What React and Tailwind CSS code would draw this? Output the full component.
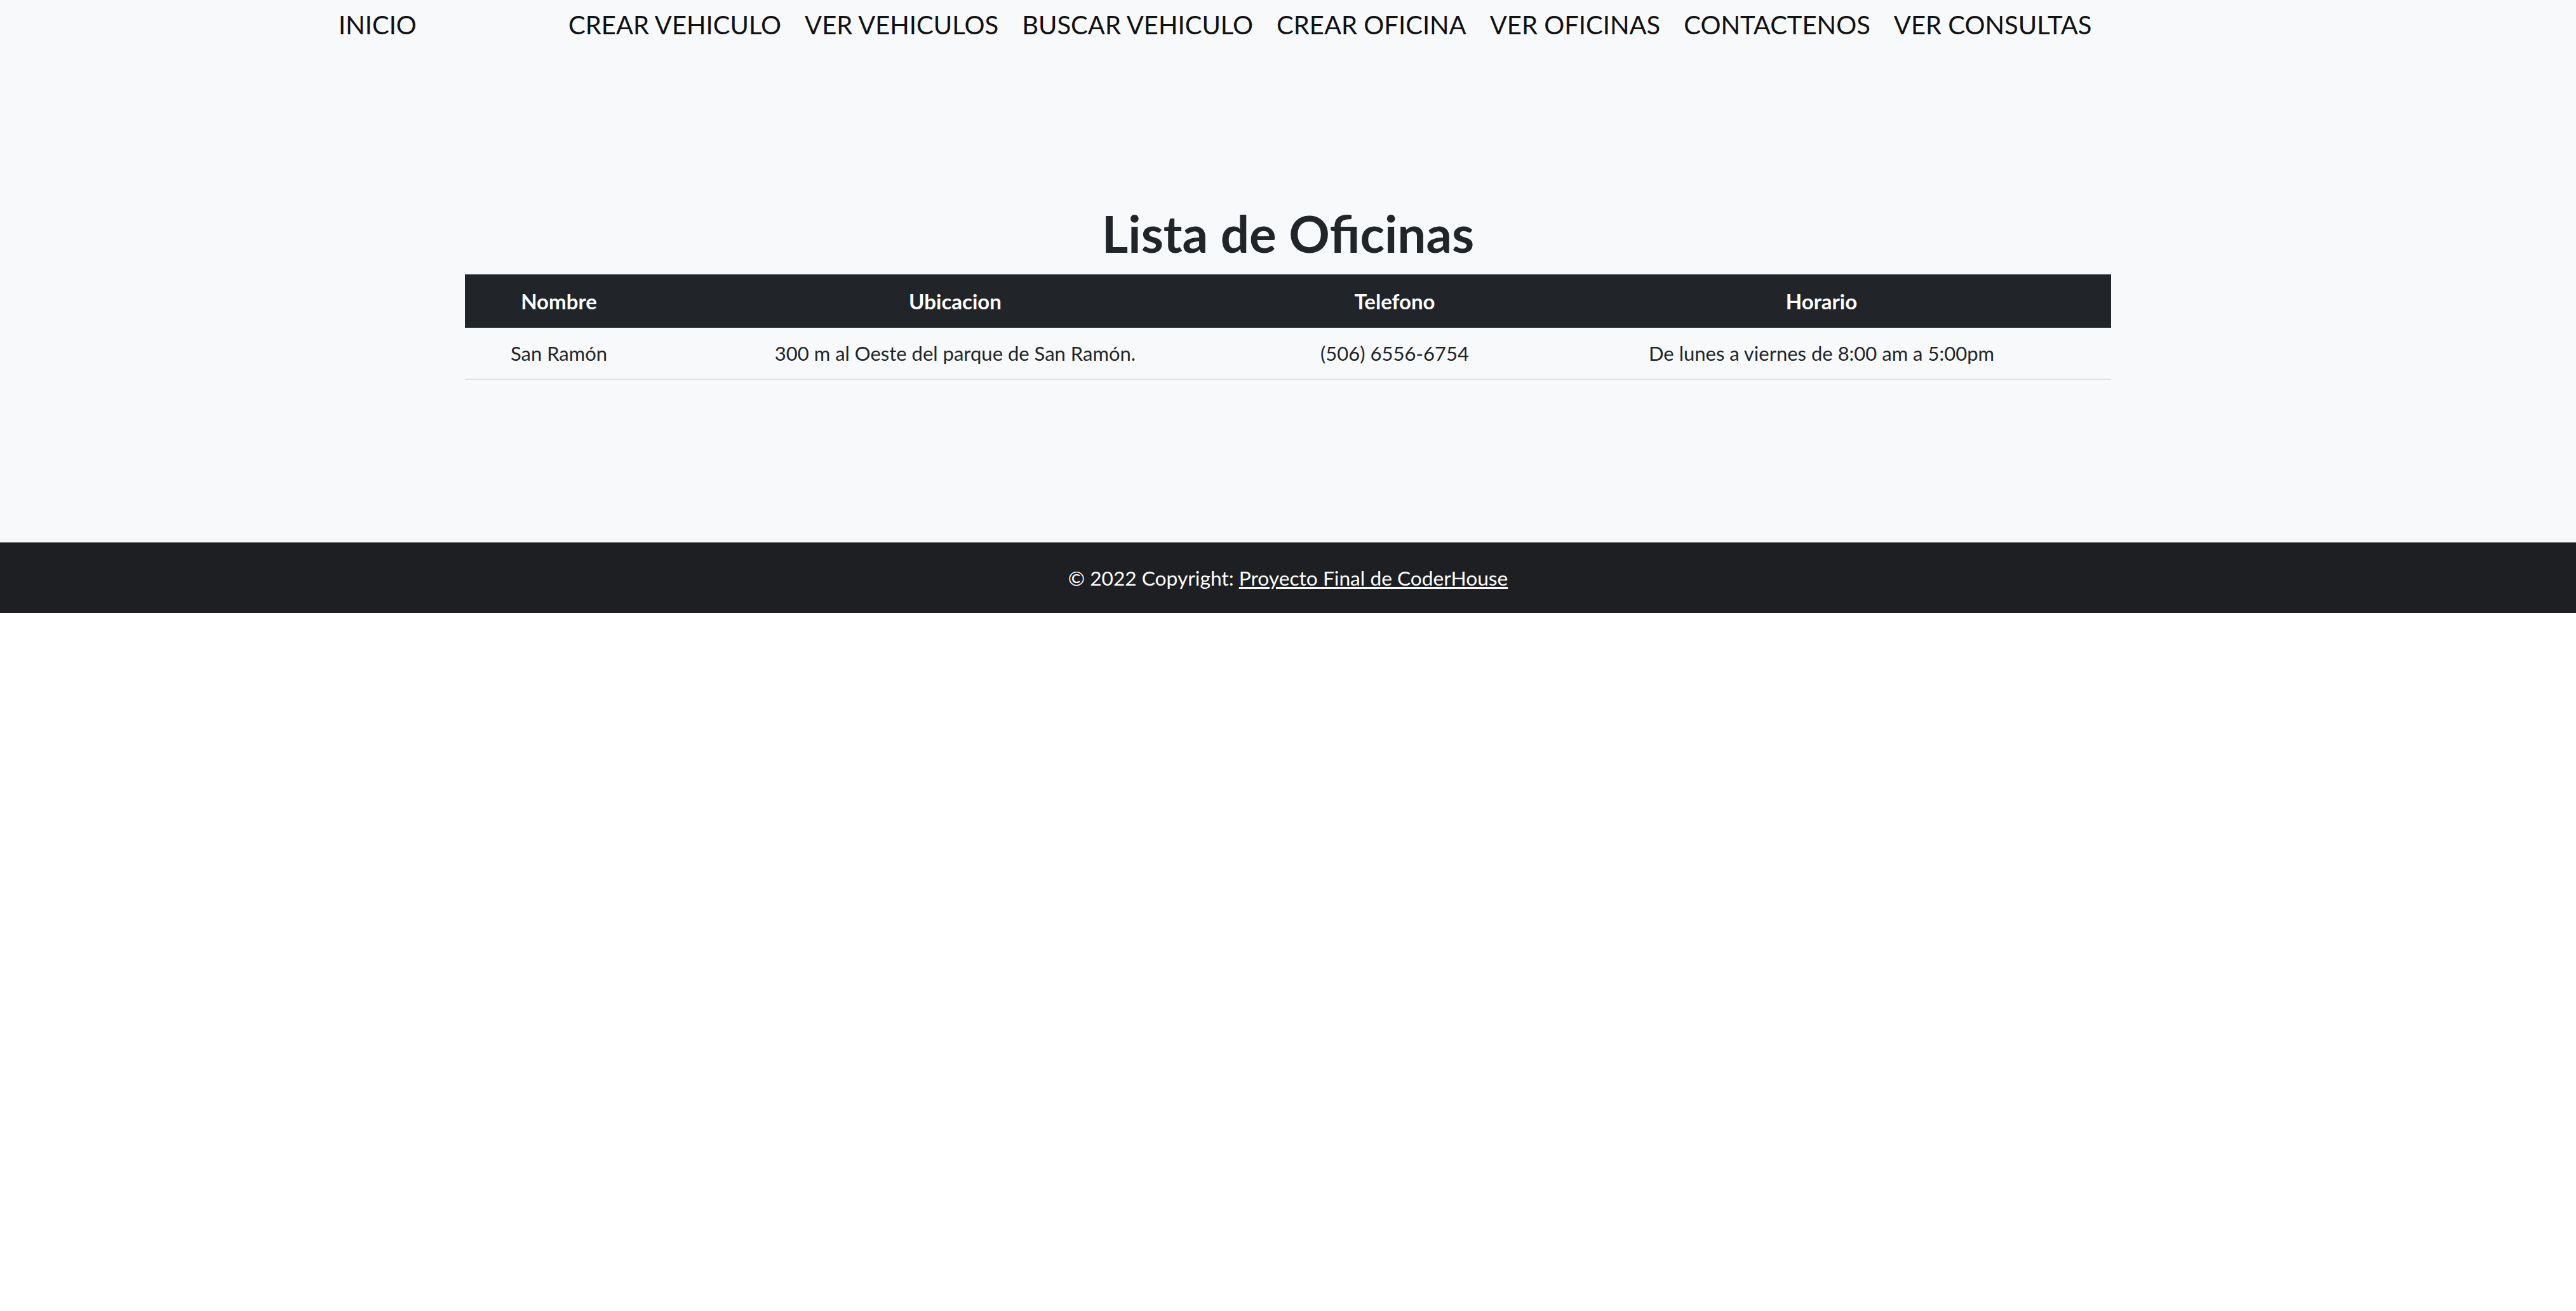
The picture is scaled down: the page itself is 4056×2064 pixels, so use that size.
import React from "react";

const links = [
  "CREAR VEHICULO",
  "VER VEHICULOS",
  "BUSCAR VEHICULO",
  "CREAR OFICINA",
  "VER OFICINAS",
  "CONTACTENOS",
  "VER CONSULTAS",
];

export default function App() {
  return (
    <div className="w-full min-h-[2064px] bg-white font-['Lato','Liberation_Sans',sans-serif]">
      <div className="bg-[#f8f9fa] h-[854px] flex flex-col">
        <nav className="flex items-center pt-[9px] pl-[533px] text-[40px] leading-[60px] text-[#111111]">
          <a className="w-[362px]">INICIO</a>
          <div className="flex gap-[37px]">
            {links.map((l) => (
              <a key={l}>{l}</a>
            ))}
          </div>
        </nav>
        <main className="flex flex-col items-center mt-[250px]">
          <h1 className="text-[80px] leading-[1.2] font-bold text-[#212529] mb-[17px]">
            Lista de Oficinas
          </h1>
          <table className="w-[2592px] table-fixed border-collapse text-[31px] leading-[50px] text-[#212529] text-center">
            <colgroup>
              <col className="w-[296px]" />
              <col className="w-[952px]" />
              <col className="w-[432px]" />
              <col className="w-[912px]" />
            </colgroup>
            <thead>
              <tr className="bg-[#212529] text-white text-[33px]">
                <th className="py-[17px] font-bold">Nombre</th>
                <th className="py-[17px] font-bold">Ubicacion</th>
                <th className="py-[17px] font-bold">Telefono</th>
                <th className="py-[17px] font-bold">Horario</th>
              </tr>
            </thead>
            <tbody>
              <tr className="border-b-[2px] border-[#dee2e6]">
                <td className="py-[15px]">San Ramón</td>
                <td className="py-[15px]">300 m al Oeste del parque de San Ramón.</td>
                <td className="py-[15px]">(506) 6556-6754</td>
                <td className="py-[15px]">De lunes a viernes de 8:00 am a 5:00pm</td>
              </tr>
            </tbody>
          </table>
        </main>
      </div>
      <footer className="bg-[#1e1f22] h-[111px] flex items-center justify-center text-white text-[31.7px] leading-[50px]">
        <span>
          © 2022 Copyright: <a className="underline">Proyecto Final de CoderHouse</a>
        </span>
      </footer>
    </div>
  );
}
